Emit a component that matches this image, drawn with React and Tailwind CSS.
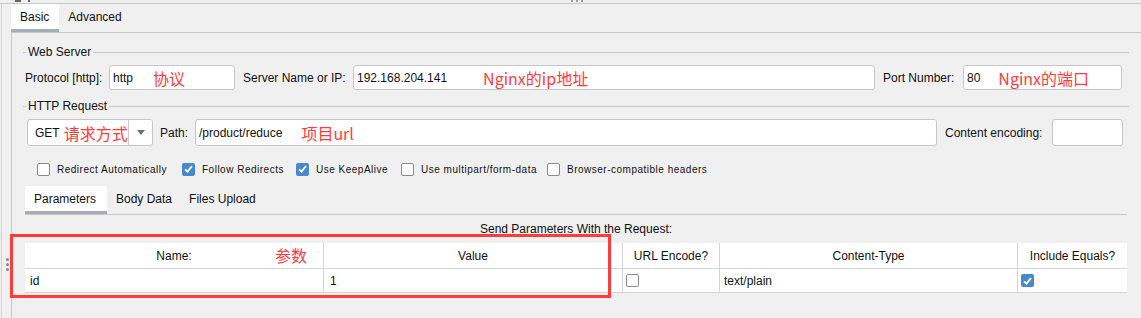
import React from 'react';

const LINE = 'bg-[#c8c8c8]';

const OPTIONS = [
  { label: 'Redirect Automatically', on: false, w: 'w-[145px]' },
  { label: 'Follow Redirects', on: true, w: 'w-[114px]' },
  { label: 'Use KeepAlive', on: true, w: 'w-[105px]' },
  { label: 'Use multipart/form-data', on: false, w: 'w-[146px]' },
  { label: 'Browser-compatible headers', on: false, w: '' },
];

export default function App() {
  return (
    <div className="w-[1141px] h-[318px] bg-[#f0f0f0] overflow-hidden relative flex flex-col font-['Liberation_Sans',Arial,sans-serif] text-[12px] text-[#111]">
      {/* top strip (clipped toolbar icons) */}
      <div className="h-[4px] shrink-0 border-b border-[#c8c8c8] flex">
        <div className="w-[15px]" />
        <div className="w-[6px] h-[2px] bg-[#666]" />
        <div className="w-[7px]" />
        <div className="w-[2px] h-[2px] bg-[#666]" />
        <div className="w-[541px]" />
        <div className="flex gap-[3px]">
          <div className="w-[2px] h-[2px] bg-[#999]" />
          <div className="w-[2px] h-[2px] bg-[#999]" />
          <div className="w-[2px] h-[2px] bg-[#999]" />
        </div>
      </div>

      <div className="flex-1 flex">
        {/* left gutter with splitter grip */}
        <div className="ml-px w-[10px] shrink-0 border-l border-[#d0d0d0] pl-[4px] pt-[254px] flex flex-col gap-[2px]">
          <div className="w-[3px] h-[3px] rounded-full bg-[#888]" />
          <div className="w-[3px] h-[3px] rounded-full bg-[#888]" />
          <div className="w-[3px] h-[3px] rounded-full bg-[#888]" />
        </div>

        <div className="flex-1 flex flex-col">
          {/* top tabs */}
          <div className="h-[29px] shrink-0 border-b border-[#c8c8c8] flex">
            <div className="bg-white pl-[9px] pr-[10px] border-b-[3px] border-[#a4adba] flex items-center">Basic</div>
            <div className="pl-[9px] pr-[10px] flex items-center pb-[3px]">Advanced</div>
          </div>

          {/* panel */}
          <div className="flex-1 border-l border-[#c8c8c8] flex flex-col">
            <Titled title="Web Server" className="mt-[12px]" />

            <div className="mt-[6px] h-[25px] pl-[13px] flex items-center">
              <span className="w-[84px] shrink-0">Protocol [http]:</span>
              <Field className="w-[126px]">
                <span>http</span>
                <Note className="ml-[20px]">协议</Note>
              </Field>
              <span className="ml-[8px] w-[110px] shrink-0">Server Name or IP:</span>
              <Field className="w-[522px]">
                <span>192.168.204.141</span>
                <Note className="ml-[36px]">Nginx的ip地址</Note>
              </Field>
              <span className="ml-[8px] w-[80px] shrink-0">Port Number:</span>
              <Field className="w-[159px]">
                <span>80</span>
                <Note className="ml-[18px]">Nginx的端口</Note>
              </Field>
            </div>

            <Titled title="HTTP Request" className="mt-[9px]" />

            <div className="mt-[6px] h-[27px] pl-[15px] flex items-center">
              <div className="w-[126px] h-full shrink-0 bg-white border border-[#c6c6c6] rounded-[3px] flex">
                <div className="flex-1 flex items-center pl-[7px]">
                  <span>GET</span>
                  <Note className="ml-[4px]">请求方式</Note>
                </div>
                <div className={`w-px ${LINE}`} />
                <div className="w-[23px] flex items-center justify-center">
                  <svg width="8" height="5" viewBox="0 0 8 5">
                    <path d="M0 0 H8 L4 5 Z" fill="#6f6f6f" />
                  </svg>
                </div>
              </div>
              <span className="ml-[7px] w-[35px] shrink-0">Path:</span>
              <Field className="w-[742px]">
                <span>/product/reduce</span>
                <Note className="ml-[19px]">项目url</Note>
              </Field>
              <span className="ml-[8px] w-[107px] shrink-0">Content encoding:</span>
              <Field className="w-[71px]" />
            </div>

            <div className="mt-[16px] h-[14px] pl-[25px] flex items-center text-[10px] tracking-[0.5px]">
              {OPTIONS.map((o) => (
                <div key={o.label} className={`flex items-center gap-[7px] shrink-0 ${o.w}`}>
                  <Check on={o.on} />
                  <span>{o.label}</span>
                </div>
              ))}
            </div>

            {/* sub tabs */}
            <div className="mt-[10px] ml-[13px] mr-[14px] h-[29px] border-b border-[#c8c8c8] flex">
              <div className="w-[82px] bg-white pl-[9px] border-b-[3px] border-[#a4adba] flex items-center">Parameters</div>
              <div className="pl-[9px] pr-[8px] flex items-center pb-[3px]">Body Data</div>
              <div className="pl-[9px] pr-[8px] flex items-center pb-[3px]">Files Upload</div>
            </div>

            <div className="mt-[7px] ml-[13px] w-[1102px] h-[14px] leading-[14px] text-center">
              Send Parameters With the Request:
            </div>

            {/* parameters table */}
            <div className="mt-[7px] ml-[13px] w-[1102px] bg-white">
              <div className="h-[26px] border-b border-[#d4d4d4] grid grid-cols-[299px_299px_97px_298px_109px]">
                <HeadCell>Name:</HeadCell>
                <HeadCell>Value</HeadCell>
                <HeadCell>URL Encode?</HeadCell>
                <HeadCell>Content-Type</HeadCell>
                <HeadCell last>Include Equals?</HeadCell>
              </div>
              <div className="h-[24px] border-b border-[#d4d4d4] grid grid-cols-[299px_299px_97px_298px_109px]">
                <Cell className="pl-[5px]">id</Cell>
                <Cell className="pl-[6px]">1</Cell>
                <Cell className="pl-[3px]"><Check on={false} /></Cell>
                <Cell className="pl-[4px]">text/plain</Cell>
                <Cell className="pl-[3px]" last><Check on /></Cell>
              </div>
            </div>
          </div>
        </div>
      </div>

      {/* red annotation overlay */}
      <div className="absolute left-[10px] top-[234px] w-[601px] h-[64px] border-[3px] border-[#ff3b3b]" />
      <Note className="absolute left-[275px] top-[246px]">参数</Note>
    </div>
  );
}

function Titled({ title, className = '' }) {
  return (
    <div className={`h-[14px] ml-[11px] mr-[12px] flex items-center ${className}`}>
      <div className={`w-[3px] h-px ${LINE}`} />
      <span className="px-[2px] leading-[14px]">{title}</span>
      <div className={`flex-1 h-px ${LINE}`} />
    </div>
  );
}

function Field({ className = '', children }) {
  return (
    <div className={`h-full shrink-0 bg-white border border-[#c6c6c6] rounded-[3px] pl-[3px] flex items-center ${className}`}>
      {children}
    </div>
  );
}

function Note({ className = '', children }) {
  return (
    <span className={`font-['Noto_Sans_CJK_SC','Noto_Sans',sans-serif] text-[16px] leading-[18px] text-[#ff3b3b] ${className}`}>
      {children}
    </span>
  );
}

function Check({ on }) {
  if (!on) {
    return <span className="w-[13px] h-[13px] shrink-0 rounded-[2px] bg-white border border-[#8a8a8a]" />;
  }
  return (
    <span className="w-[13px] h-[13px] shrink-0 rounded-[2px] bg-[#4a88cc] flex items-center justify-center">
      <svg width="9" height="8" viewBox="0 0 9 8">
        <path d="M1 4.3 L3.5 6.6 L8 1.2" stroke="#fff" strokeWidth="1.8" fill="none" />
      </svg>
    </span>
  );
}

function HeadCell({ last, children }) {
  return (
    <div className={`flex items-center justify-center ${last ? '' : 'border-r border-[#d4d4d4]'}`}>
      {children}
    </div>
  );
}

function Cell({ last, className = '', children }) {
  return (
    <div className={`flex items-center ${last ? '' : 'border-r border-[#d4d4d4]'} ${className}`}>
      {children}
    </div>
  );
}
